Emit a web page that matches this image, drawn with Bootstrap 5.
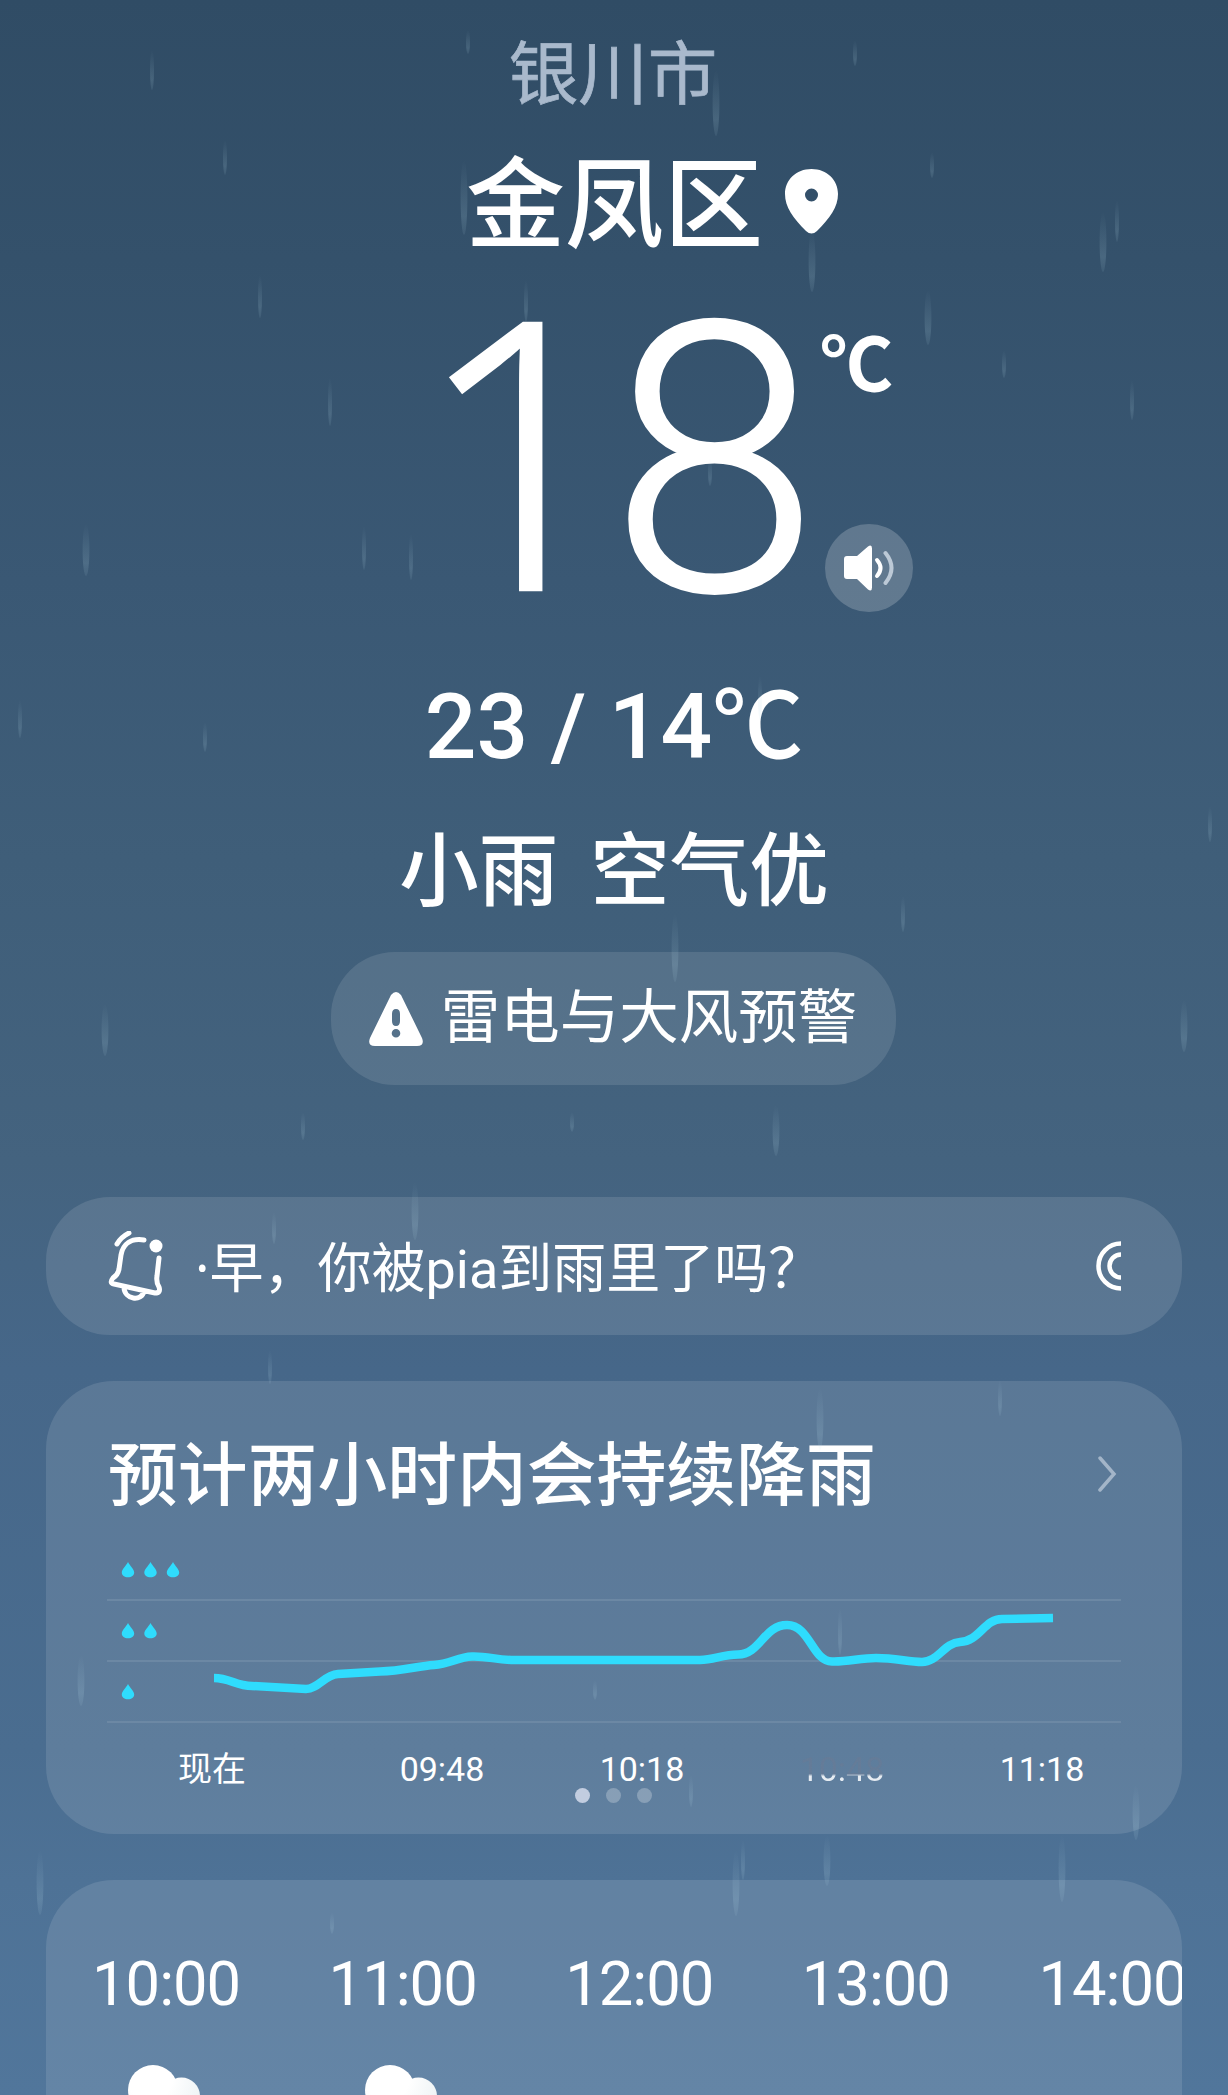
<!DOCTYPE html>
<html lang="zh-CN">
<head>
<meta charset="utf-8">
<meta name="viewport" content="width=device-width, initial-scale=1">
<title>金凤区 天气</title>
<link href="https://cdn.jsdelivr.net/npm/bootstrap@5.3.0/dist/css/bootstrap.min.css" rel="stylesheet">
<style>
body{width:1228px;height:2095px;overflow:hidden;color:#fff;font-family:"Noto Sans","Noto Sans CJK SC",sans-serif;
background:linear-gradient(180deg,#304c65 0,#34516b 260px,#3a5874 580px,#3f5e79 860px,#44637f 1160px,#466789 1370px,#4a6d90 1750px,#4e7296 1880px,#51769b 2095px)}
.rain{position:absolute;left:0;top:0;pointer-events:none}
.screen{position:relative;height:2095px;overflow:hidden}
.screen>*{flex-shrink:0}
.num{font-family:Roboto,"Noto Sans CJK SC",sans-serif}
.city{height:96px;line-height:96px;margin-top:24px;font-size:69.5px;color:#a9b9cc;-webkit-text-stroke:.7px #a9b9cc;padding-right:2px}
.district{height:110px;line-height:110px;margin-top:27px;font-size:99px;font-weight:500;gap:22px;padding-left:76px}
.now{height:380px;margin-top:13px;padding-left:415px}
.deg{line-height:380px;margin-top:-15px;font-weight:300;width:406px;white-space:nowrap;-webkit-text-stroke:2.5px #fff}
.deg .one{font-size:374px;width:195px}
.deg .eight{font-size:376px;width:211px}
.unit{font-size:73px;line-height:80px;font-weight:700;margin-top:56px;margin-left:-1px;height:80px}
.speak{width:88px;height:88px;border-radius:50%;background:rgba(255,255,255,.2);margin-top:118px;margin-left:4px}
.range{height:100px;line-height:100px;margin-top:27px;font-size:91px;font-weight:500}
.cond{height:100px;line-height:100px;margin-top:41px;font-size:79.5px;font-weight:500;gap:32px}
.warnpill{width:565px;height:133px;margin-top:34px;margin-right:2px;border-radius:64px;background:rgba(255,255,255,.11);font-size:59.5px;gap:18px;line-height:133px}
.glass{background:rgba(255,255,255,.115);margin:0 46px}
.notice{height:138px;border-radius:64px;margin-top:112px;padding:0 61px 0 62px;font-size:54px;line-height:138px}
.notice .msg{padding:4px 0 0 30px}
.forecast{height:453px;border-radius:68px;margin-top:46px;padding:0 61px}
.ttl{font-size:69.8px;font-weight:500;line-height:100px;margin:-2px 0 0 1px}
.axis{font-size:34px;line-height:40px;height:40px;margin-top:13px;padding-left:5px}
.axis span{flex:none;width:200px;text-align:center}
.axis span:first-child{margin-right:30px}
.axis .half{color:transparent;background:linear-gradient(180deg,rgba(120,120,140,.25) 0 62%,#e6ecf2 68%);-webkit-background-clip:text;background-clip:text}
.pagerow{gap:16px;margin:-1px 2px 0 0}
.pg{width:15px;height:15px;border-radius:50%;background:rgba(255,255,255,.25)}
.pg.on{background:#c2cde0}
.hourly{height:300px;border-radius:68px 68px 0 0;margin-top:46px;overflow:hidden;padding-top:62px}
.hour{flex:0 0 236.6px;font-size:61.5px;line-height:84px}
.hour .tm{padding-left:46px;letter-spacing:-1px}
.hour .cloud{margin:34px 0 0 47px}
</style>
<script src="https://cdn.jsdelivr.net/npm/bootstrap@5.3.0/dist/js/bootstrap.bundle.min.js"></script>
</head>
<body>
<div class="screen d-flex flex-column">
<svg class="rain" width="1228" height="2095" id="rain"><defs><linearGradient id="rg" x1="0" y1="0" x2="0" y2="1"><stop offset="0" stop-color="#b9dcea" stop-opacity="0"/><stop offset=".75" stop-color="#b9dcea" stop-opacity=".16"/><stop offset="1" stop-color="#b9dcea" stop-opacity=".08"/></linearGradient></defs></svg>

<div class="city text-center">银川市</div>
<div class="district d-flex justify-content-center align-items-center"><span>金凤区</span>
<svg width="53" height="66" viewBox="0 0 53 66"><path fill="#fff" fill-rule="evenodd" d="M26.5 0C11 0 0 11 0 25c0 13 8 24 21 37q5.500 5 11 0C45 49 53 38 53 25 53 11 42 0 26.500 0Zm0 19.500a6.500 6.500 0 1 1 0 13 6.500 6.500 0 0 1 0-13Z"/></svg></div>

<div class="now d-flex"><div class="deg d-flex align-items-baseline"><span class="one">1</span><span class="eight num">8</span></div><div><div class="unit num">℃</div>
<div class="speak d-flex align-items-center justify-content-center"><svg width="50" height="46" viewBox="0 0 50 46" fill="none" stroke-linecap="round"><path fill="#fff" d="M3 11h10L24 1.500q4-2.500 4 2v39q0 4.500-4 2L13 34H3q-3 0-3-3V14q0-3 3-3Z"/><path stroke="#fff" stroke-width="4" d="M33 15q7 8 0 16"/><path stroke="#bcc9d6" stroke-width="4" d="M41.500 8q12 15 0 30"/></svg></div></div></div>

<div class="range num text-center"><span>23 / 14℃</span></div>
<div class="cond d-flex justify-content-center"><span>小雨</span><span>空气优</span></div>
<div class="d-flex justify-content-center"><div class="warnpill num d-flex align-items-center justify-content-center">
<svg width="54" height="54" viewBox="0 0 54 54"><path fill="#fff" fill-rule="evenodd" d="M22 3q5-6 10 0l21 43q3 8-5 8H6q-8 0-5-8ZM27 17q-4 0-4 5v7q0 5 4 5t4-5v-7q0-5-4-5Zm0 20a4.300 4.300 0 1 0 0 8.600 4.300 4.300 0 0 0 0-8.600Z"/></svg><span>雷电与大风预警</span></div></div>

<div class="glass notice d-flex align-items-center">
<svg width="57" height="70" viewBox="0 0 57 70" fill="none" stroke="#fff" stroke-width="5" stroke-linecap="round" stroke-linejoin="round"><path d="M36 9C23 7 15 13 13 24l-2 14q-1 6-6 9-4 5 1 6l41 9q6 0 4-6-3-5-2-11l2-18M16 56c0 13 18 15 20 4M9 13Q13 6 21 2"/><circle cx="48" cy="15" r="6.500" fill="#fff" stroke="none"/></svg>
<span class="msg flex-grow-1 text-nowrap">·早，你被<span class="num">pia</span>到雨里了吗？</span>
<svg width="25" height="50" viewBox="0 0 25 50" fill="none" stroke="#fff" stroke-width="4.500"><circle cx="25" cy="25" r="22.500"/><circle cx="25" cy="25" r="11.500"/></svg></div>

<div class="glass forecast">
<div class="d-flex justify-content-between align-items-center" style="height:185px"><span class="ttl">预计两小时内会持续降雨</span><svg width="26" height="36" viewBox="0 0 26 36" fill="none" stroke="#a3b5c8" stroke-width="3.500" stroke-linecap="round"><path d="m5 2 14 16L5 34"/></svg></div>
<svg class="d-block overflow-visible" id="chart" width="1014" height="170" viewBox="107 1566 1014 170"><g stroke="#6c88a4" stroke-width="2"><path d="M107 1600h1014M107 1661h1014M107 1722h1014"/></g>
<defs><path id="dp" d="M0-8C2-4 6.200-1 6.200 2.500C6.200 5.500 3.500 7.300 0 7.300S-6.200 5.500-6.200 2.500C-6.200-1-2-4 0-8Z"/></defs>
<path fill="none" stroke="#2fdcfd" stroke-width="8.500" d="M214 1678C230 1678 236 1686 252 1686L306 1689C318 1689 324 1675 338 1674L380 1671.500C402 1671 418 1666 434 1665 450 1664 458 1657 472 1656.500 488 1656 496 1660 514 1660H700C714 1660 722 1654.500 738 1654.500 760 1654.500 764 1625 787 1625 810 1625 812 1661 832 1661.500 848 1662 860 1658 876 1658 896 1658 908 1662 922 1662 938 1662 944 1643 960 1642 980 1641 984 1619 1002 1619L1053 1618"/></svg>
<div class="axis num d-flex text-nowrap"><span>现在</span><span>09:48</span><span>10:18</span><span class="half">10:48</span><span>11:18</span></div>
<div class="d-flex justify-content-center pagerow"><span class="pg on"></span><span class="pg"></span><span class="pg"></span></div>
</div>

<div class="glass hourly"><div class="num d-flex text-nowrap" id="hours"></div></div>
</div>
<script>
const ns='http://www.w3.org/2000/svg';
// rain streaks: x, top, bottom
const drops=[[716,70,136],[812,230,292],[526,280,322],[464,160,235],[330,378,426],[86,524,576],[20,700,738],[205,722,752],[1103,212,272],[1117,200,242],[928,290,345],[1004,350,378],[710,458,486],[675,914,982],[903,896,932],[105,1004,1056],[1184,1000,1052],[1210,806,842],[776,1105,1156],[415,1182,1240],[274,1212,1244],[572,1112,1132],[270,1350,1384],[1000,1380,1416],[820,1388,1450],[81,1655,1706],[1136,1785,1840],[691,1775,1807],[40,1850,1915],[736,1850,1916],[743,1840,1880],[827,1835,1886],[1062,1835,1902],[332,1912,1934],[840,1608,1655],[595,1680,1700],[468,30,54],[855,40,66],[152,50,90],[225,140,175],[260,275,318],[1132,380,420],[411,534,580],[364,526,570],[932,152,178],[303,1112,1140],[760,676,720]];
for(const [x,a,b] of drops){const e=document.createElementNS(ns,'ellipse');e.setAttribute('cx',x);e.setAttribute('cy',(a+b)/2);e.setAttribute('rx',b-a>50?3.4:2);e.setAttribute('ry',(b-a)/2);e.setAttribute('fill','url(#rg)');document.getElementById('rain').append(e)}
const chart=document.getElementById('chart');
[[128,1570],[150.5,1570],[173,1570],[128,1631],[150.5,1631],[128,1692]].forEach(([x,y])=>{const u=document.createElementNS(ns,'use');u.setAttribute('href','#dp');u.setAttribute('x',x);u.setAttribute('y',y);u.setAttribute('fill','#2fdcfd');chart.append(u)});
const cloud='<svg class="cloud d-block" width="120" height="60" viewBox="93 2060 120 60"><defs><radialGradient id="cg" gradientUnits="userSpaceOnUse" cx="150" cy="2078" r="75"><stop offset=".3" stop-color="#fff"/><stop offset="1" stop-color="#e2ebee"/></radialGradient></defs><g fill="url(#cg)"><circle cx="181.5" cy="2096" r="18.5"/><circle cx="153" cy="2090" r="25"/></g></svg>';
document.getElementById('hours').innerHTML=['10:00','11:00','12:00','13:00','14:00'].map((t,i)=>`<div class="hour"><div class="tm">${t}</div>${i<2?cloud:''}</div>`).join('');
</script>
</body>
</html>
